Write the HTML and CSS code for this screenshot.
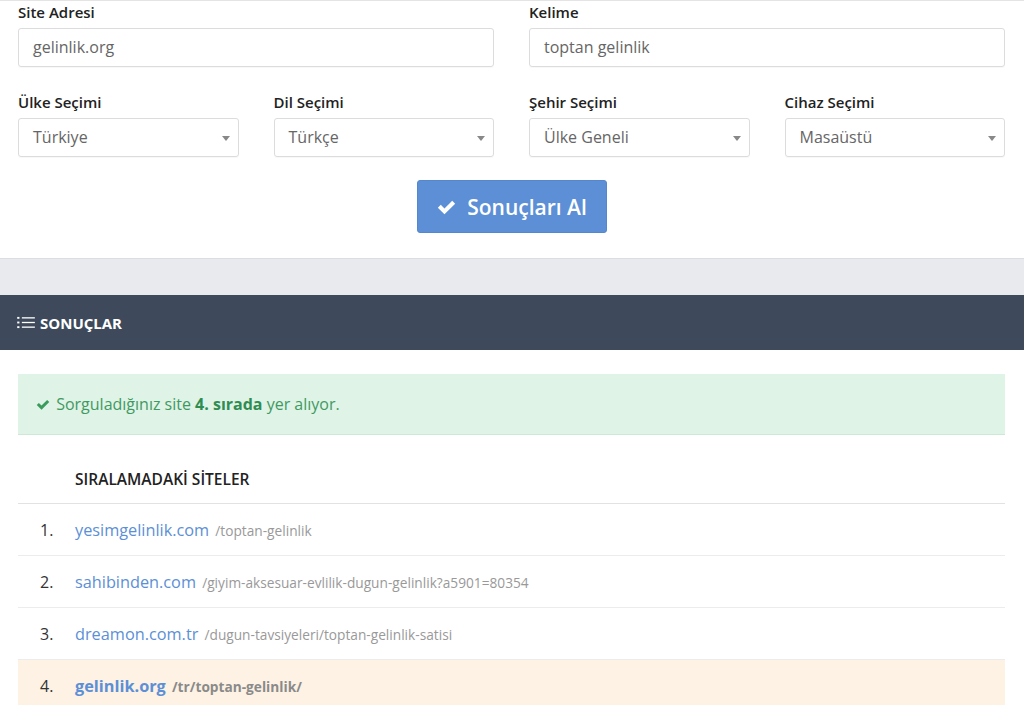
FILE: index.html
```html
<!DOCTYPE html>
<html lang="tr">
<head>
    <meta charset="UTF-8">
    <title>Sıra Bulucu</title>
    <link rel="stylesheet" href="styles.css">
</head>
<body>
    <div class="query-form">
        <div class="row two">
            <div class="field">
                <label>Site Adresi</label>
                <div class="input">gelinlik.org</div>
            </div>
            <div class="field">
                <label>Kelime</label>
                <div class="input">toptan gelinlik</div>
            </div>
        </div>
        <div class="row four">
            <div class="field">
                <label>Ülke Seçimi</label>
                <div class="input select">Türkiye<span class="caret"></span></div>
            </div>
            <div class="field">
                <label>Dil Seçimi</label>
                <div class="input select">Türkçe<span class="caret"></span></div>
            </div>
            <div class="field">
                <label>Şehir Seçimi</label>
                <div class="input select">Ülke Geneli<span class="caret"></span></div>
            </div>
            <div class="field">
                <label>Cihaz Seçimi</label>
                <div class="input select">Masaüstü<span class="caret"></span></div>
            </div>
        </div>
        <div class="btn-row">
            <button type="button" class="submit-btn">
                <svg class="check" viewBox="0 0 16 16"><path d="M0.3 8.6l2.6-2.6 3.3 3.3 6.9-6.9 2.6 2.6-9.5 9.5z"/></svg>
                Sonuçları Al
            </button>
        </div>
    </div>

    <div class="spacer"></div>

    <div class="results-head">
        <svg class="list-icon" viewBox="0 0 20 14">
            <rect x="0" y="1" width="2.4" height="2" />
            <rect x="0" y="6" width="2.4" height="2" />
            <rect x="0" y="11" width="2.4" height="2" />
            <rect x="5" y="1.3" width="14" height="1.4" />
            <rect x="5" y="6.3" width="14" height="1.4" />
            <rect x="5" y="11.3" width="14" height="1.4" />
        </svg>
        SONUÇLAR
    </div>

    <div class="results">
        <div class="alert">
            <svg class="check small" viewBox="0 0 16 16"><path d="M0.3 8.6l2.6-2.6 3.3 3.3 6.9-6.9 2.6 2.6-9.5 9.5z"/></svg>
            Sorguladığınız site <b>4. sırada</b> yer alıyor.
        </div>

        <div class="rank-table">
            <div class="rank-row head">
                <span></span>
                <span>SIRALAMADAKİ SİTELER</span>
            </div>
            <div class="rank-row">
                <span class="num">1.</span>
                <span><a href="#">yesimgelinlik.com</a> <small>/toptan-gelinlik</small></span>
            </div>
            <div class="rank-row">
                <span class="num">2.</span>
                <span><a href="#">sahibinden.com</a> <small>/giyim-aksesuar-evlilik-dugun-gelinlik?a5901=80354</small></span>
            </div>
            <div class="rank-row">
                <span class="num">3.</span>
                <span><a href="#">dreamon.com.tr</a> <small>/dugun-tavsiyeleri/toptan-gelinlik-satisi</small></span>
            </div>
            <div class="rank-row mine">
                <span class="num">4.</span>
                <span><a href="#">gelinlik.org</a> <small>/tr/toptan-gelinlik/</small></span>
            </div>
        </div>
    </div>
</body>
</html>
```

FILE: styles.css
```css
body {
    font-family: "Open Sans", "Noto Sans", sans-serif;
    margin: 0px;
    background-color: #fff;
    color: #333;
}

.query-form {
    border-top: 1px solid #e4e4e4;
    padding: 1px 19px 25px 18px;
}

.row {
    display: grid;
    column-gap: 35px;
}

.row.two {
    grid-template-columns: 1fr 1fr;
}

.row.four {
    grid-template-columns: 1fr 1fr 1fr 1fr;
    margin-top: 25px;
}

.field label {
    display: block;
    font-size: 15px;
    font-weight: 600;
    color: #222;
    line-height: 20px;
    margin-bottom: 6px;
}

.input {
    height: 37px;
    border: 1px solid #dcdcdc;
    border-radius: 3px;
    padding: 0 14px;
    font-size: 16px;
    line-height: 37px;
    color: #666;
    position: relative;
    box-shadow: 0 1px 1px rgba(0, 0, 0, 0.03);
}

.caret {
    position: absolute;
    right: 8px;
    top: 17px;
    border-left: 4px solid transparent;
    border-right: 4px solid transparent;
    border-top: 5px solid #888;
}

.btn-row {
    display: flex;
    justify-content: center;
    margin-top: 23px;
}

.submit-btn {
    width: 190px;
    height: 53px;
    background: #5c8fd6;
    border: 1px solid #5587cf;
    border-radius: 3px;
    color: #fff;
    font-family: inherit;
    font-size: 21px;
    font-weight: 600;
    display: flex;
    align-items: center;
    justify-content: center;
    gap: 10px;
    cursor: pointer;
}

.check {
    width: 21px;
    height: 18px;
    fill: #fff;
}

.check.small {
    width: 14px;
    height: 13px;
    fill: #3a9b5c;
    vertical-align: -1px;
    margin-right: 2px;
}

.spacer {
    height: 36px;
    background: #e9eaee;
    border-top: 1px solid #dcdde1;
}

.results-head {
    height: 55px;
    background: #3e4a5b;
    color: #fff;
    font-size: 15px;
    font-weight: 700;
    display: flex;
    align-items: center;
    padding-left: 17px;
    gap: 4px;
}

.list-icon {
    width: 19px;
    height: 13px;
    fill: #fff;
}

.results {
    padding: 24px 19px 0 18px;
}

.alert {
    height: 60px;
    line-height: 60px;
    background: #dff3e7;
    border-bottom: 1px solid #cbe9d6;
    color: #3f9a62;
    font-size: 16px;
    padding-left: 18px;
}

.alert b {
    font-weight: 700;
    color: #2f8d52;
}

.rank-table {
    margin-top: 20px;
}

.rank-row {
    display: grid;
    grid-template-columns: 57px 1fr;
    align-items: center;
    height: 51px;
    border-top: 1px solid #ececec;
}

.rank-row.head {
    height: 48px;
    border-top: none;
    border-bottom: 1px solid #e2e2e2;
    font-size: 15.5px;
    font-weight: 600;
    color: #222;
}

.rank-row.head + .rank-row {
    border-top: none;
    height: 51px;
}

.num {
    padding-left: 22px;
    font-size: 16px;
    color: #333;
}

.rank-row a {
    color: #5c8fd6;
    text-decoration: none;
    font-size: 16.3px;
}

.rank-row small {
    font-size: 13.7px;
    color: #999;
    margin-left: 2px;
}

.rank-row.mine {
    background: #fdf2e4;
}

.rank-row.mine a {
    font-weight: 700;
}

.rank-row.mine small {
    font-weight: 700;
    color: #8a8a8a;
}
```
